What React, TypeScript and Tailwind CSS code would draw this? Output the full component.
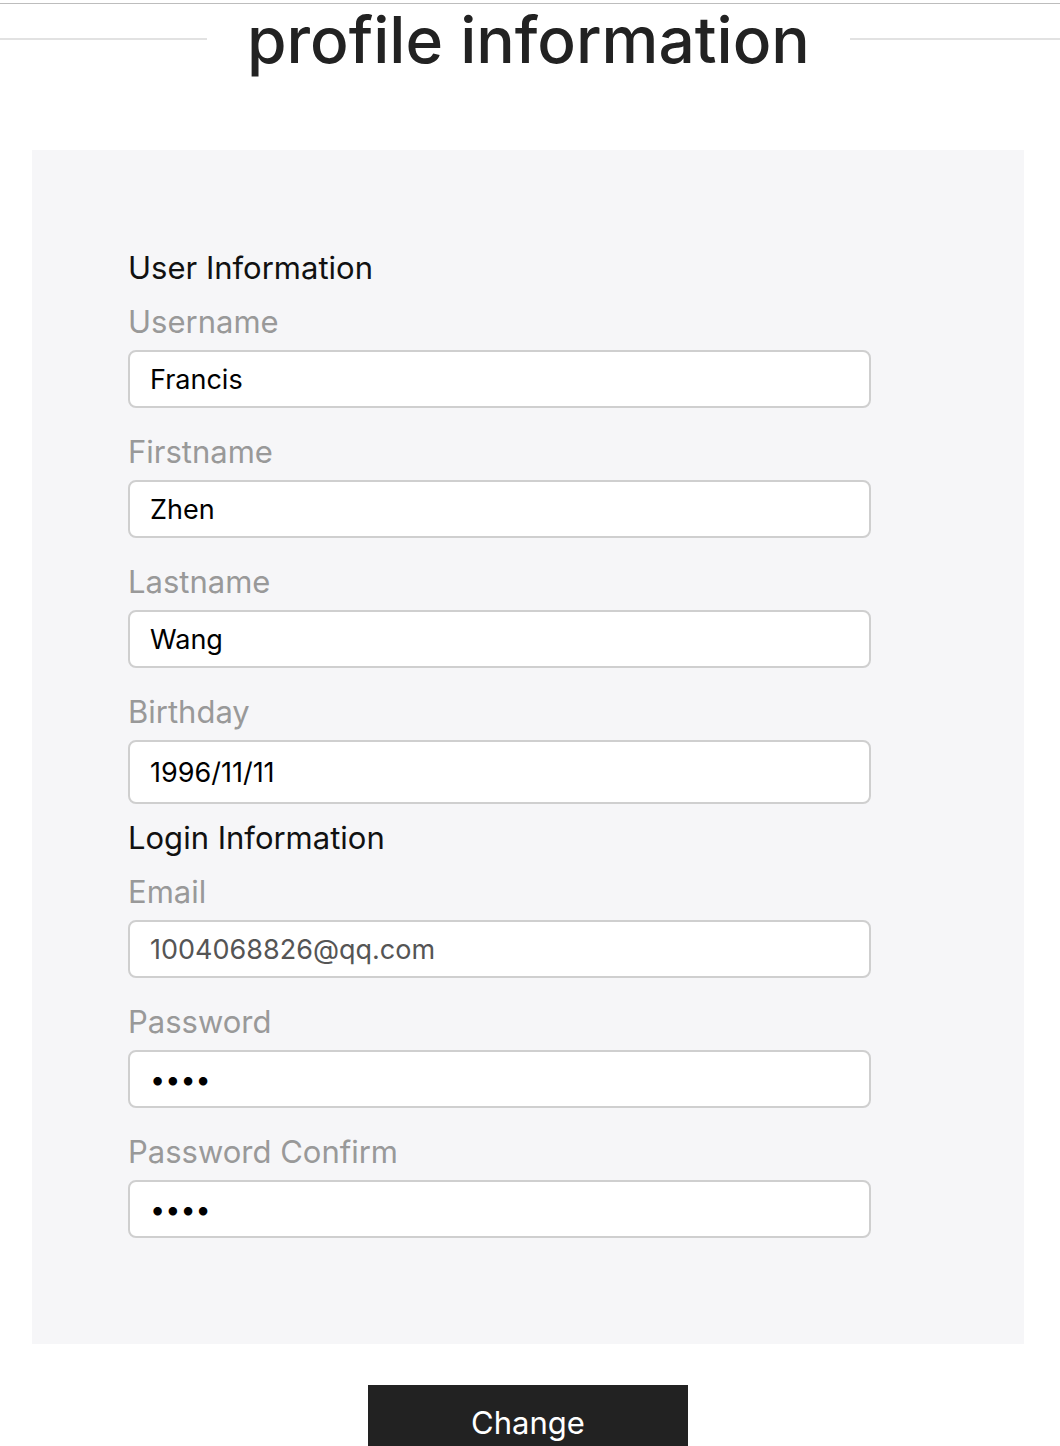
import React from 'react';

const font = { fontFamily: 'Inter, "Noto Sans", sans-serif' };

function Field({ label, value, type = 'text', tall = false, muted = false }: { label: string; value: string; type?: string; tall?: boolean; muted?: boolean }) {
  return (
    <div>
      <label className="block mt-[21px] mb-[6px] text-[31px] leading-[45px] text-[#999999]">{label}</label>
      <input
        type={type}
        defaultValue={value}
        readOnly
        className={`block w-[743px] ${tall ? 'h-[64px]' : 'h-[58px]'} px-[20px] bg-white border-2 border-[#cfcfcf] rounded-[8px] text-[27px] ${muted ? 'text-[#555555]' : 'text-black'} outline-none`}
        style={font}
      />
    </div>
  );
}

export default function App() {
  return (
    <div className="w-[1060px] min-h-[1446px] bg-white overflow-hidden" style={font}>
      <div className="border-t border-[#bdbdbd] mt-[3px]" />
      {/* Title */}
      <div className="flex h-[72px]">
        <div className="w-[207px] h-[2px] bg-[#e2e2e2] mt-[34px]" />
        <h1 className="px-[40px] text-[64px] leading-[72px] font-medium text-[#222222] whitespace-nowrap">profile information</h1>
        <div className="flex-1 h-[2px] bg-[#e2e2e2] mt-[34px]" />
      </div>

      {/* Form panel */}
      <div className="ml-[32px] mr-[36px] mt-[74px] bg-[#f6f6f8] pl-[96px] pt-[95px] pb-[106px]">
        <h2 className="text-[31px] leading-[45px] text-[#111111]">User Information</h2>
        <div className="-mt-[12px]">
          <Field label="Username" value="Francis" />
        </div>
        <Field label="Firstname" value="Zhen" />
        <Field label="Lastname" value="Wang" />
        <Field label="Birthday" value="1996/11/11" tall />
        <h2 className="mt-[11px] text-[31px] leading-[45px] text-[#111111]">Login Information</h2>
        <div className="-mt-[12px]">
          <Field label="Email" value="1004068826@qq.com" muted />
        </div>
        <Field label="Password" value="1234" type="password" />
        <Field label="Password Confirm" value="1234" type="password" />
      </div>

      <div className="flex justify-center mt-[41px] pr-[4px]">
        <button className="w-[320px] h-[70px] bg-[#222222] text-white text-[31px] pt-[6px]">Change</button>
      </div>
    </div>
  );
}
